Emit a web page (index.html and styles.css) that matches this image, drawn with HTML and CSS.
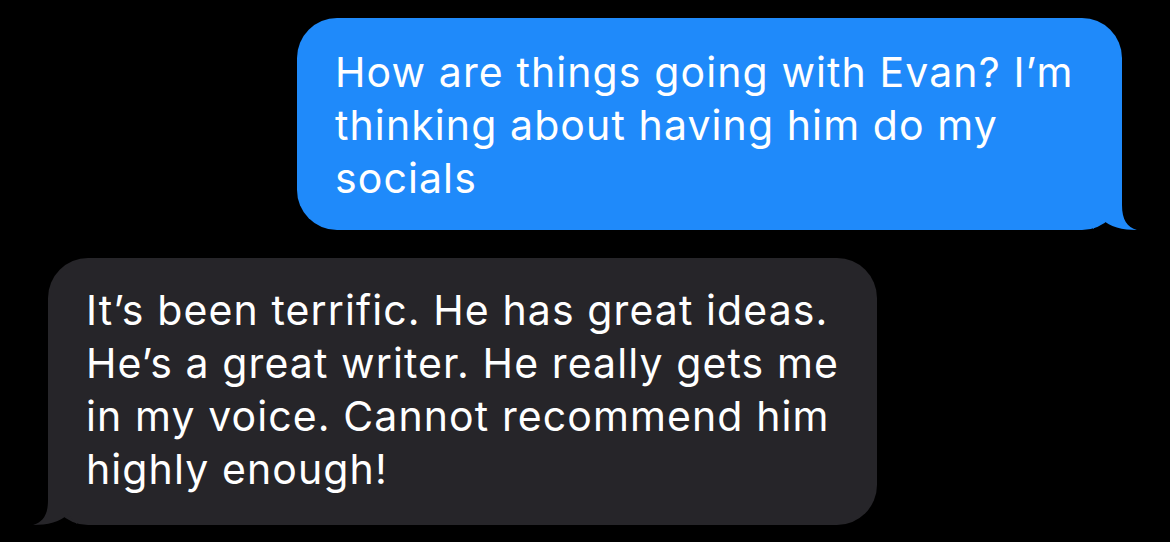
FILE: index.html
```html
<!DOCTYPE html>
<html lang="en">
<head>
    <meta charset="UTF-8">
    <meta name="viewport" content="width=device-width, initial-scale=1.0">
    <title>Messages</title>
    <link rel="stylesheet" href="styles.css">
</head>
<body>

    <div class="thread">
        <div class="bubble sent">
            <p>How are things going with Evan? I’m<br>thinking about having him do my<br>socials</p>
            <svg class="tail" width="44" height="40" viewBox="0 0 44 40">
                <path d="M0 0 L29 0 L29 15 C29 30 34 37 44 40 C30 40 16 37 9 29 C6 33 3 37 0 39 Z"/>
            </svg>
        </div>
        <div class="bubble received">
            <p>It’s been terrific. He has great ideas.<br>He’s a great writer. He really gets me<br>in my voice. Cannot recommend him<br>highly enough!</p>
            <svg class="tail" width="44" height="40" viewBox="0 0 44 40">
                <path d="M0 0 L29 0 L29 15 C29 30 34 37 44 40 C30 40 16 37 9 29 C6 33 3 37 0 39 Z"/>
            </svg>
        </div>
    </div>

</body>
</html>
```

FILE: styles.css
```css
body{
    margin:0;
    background:#000;
    font-family:Inter, "Liberation Sans", sans-serif;
}
.thread{
    display:flex;
    flex-direction:column;
    gap:28px;
    padding:18px 48px 0 48px;
}
.bubble{
    position:relative;
    box-sizing:border-box;
    border-radius:40px;
    padding:28px 38px 25px 38px;
    color:#fff;
    font-size:41px;
    line-height:53px;
    letter-spacing:1.1px;
}
.bubble p{
    margin:0;
}
.sent{
    align-self:flex-end;
    width:825px;
    background:#1f8afa;
}
.received{
    align-self:flex-start;
    width:829px;
    background:#262529;
    padding-top:26px;
    padding-bottom:29px;
}
.tail{
    position:absolute;
    bottom:0;
    display:block;
}
.sent .tail{
    right:-15px;
    fill:#1f8afa;
}
.received .tail{
    left:-15px;
    fill:#262529;
    transform:scaleX(-1);
}
```
